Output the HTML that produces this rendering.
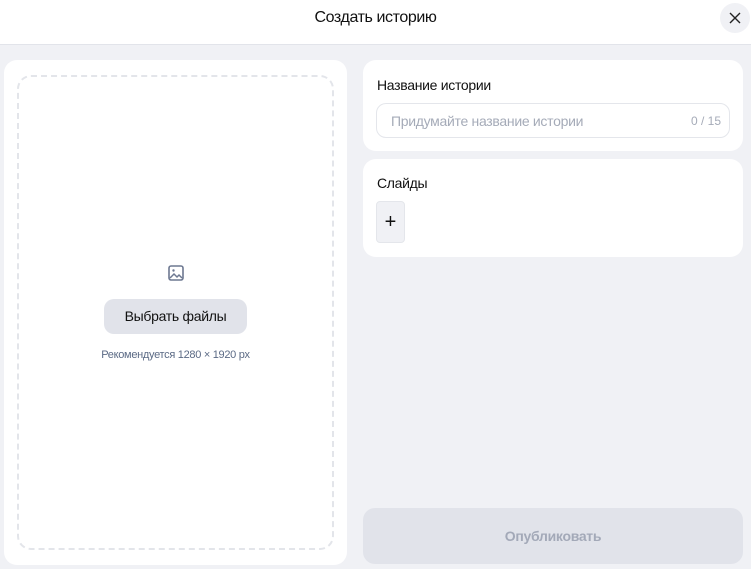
<!DOCTYPE html>
<html><head><meta charset="utf-8"><style>
*{box-sizing:border-box;margin:0;padding:0}
body{width:751px;height:569px;background:#f0f1f5;font-family:"Liberation Sans","Noto Sans CJK SC",sans-serif;position:relative;overflow:hidden;color:#111}
.hdr{position:absolute;left:0;top:0;width:751px;height:45px;background:#fff;border-bottom:1px solid #e2e4ea}
.title{position:absolute;top:9px;left:0;width:751px;text-align:center;font-size:16px;letter-spacing:-0.4px}
.close{position:absolute;left:720px;top:3px;width:30px;height:30px;border-radius:50%;background:#f0f1f5}
.card{position:absolute;background:#fff;border-radius:13px}
.dash{position:absolute;left:13px;top:15px;width:317px;height:475px;border:2px dashed #e3e5ea;border-radius:14px}
.btn{position:absolute;left:104px;top:299px;width:143px;height:35px;border-radius:10px;background:#e1e3ea;font-size:14px;text-align:center;line-height:35px;letter-spacing:-0.3px}
.rec{position:absolute;left:0;width:351px;top:349px;text-align:center;font-size:11px;color:#5b6a85;letter-spacing:-0.3px}
.lbl{position:absolute;left:14px;font-size:14px;letter-spacing:-0.3px}
.inp{position:absolute;left:13px;top:43px;width:354px;height:35px;border:1px solid #e4e6eb;border-radius:10px}
.ph{position:absolute;left:14px;top:9px;font-size:14px;color:#a5abb8;letter-spacing:-0.3px}
.cnt{position:absolute;right:8px;top:10px;font-size:12px;color:#a5abb8}
.plus{position:absolute;left:13px;top:42px;width:29px;height:42px;border-radius:4px;background:#f0f1f5;border:1px solid #e4e6eb;text-align:center;line-height:40px;font-size:20px}
.pub{position:absolute;left:363px;top:508px;width:380px;height:56px;border-radius:12px;background:#e1e3ea;color:#a3a9b8;font-size:14px;text-align:center;line-height:56px;font-weight:bold;letter-spacing:-0.3px}
</style></head><body>
<div class="hdr"><div class="title">Создать историю</div>
<div class="close"><svg width="30" height="30" viewBox="0 0 30 30"><path d="M10 10L20 20M20 10L10 20" stroke="#222" stroke-width="1.4" fill="none"/></svg></div></div>
<div class="card" style="left:4px;top:60px;width:343px;height:505px">
<div class="dash"></div></div>
<svg style="position:absolute;left:167px;top:264px" width="18" height="18" viewBox="0 0 18 18"><rect x="2" y="2" width="14" height="14" rx="2" fill="none" stroke="#6d7891" stroke-width="1.6"/><circle cx="6.5" cy="6.5" r="1.2" fill="#6d7891"/><path d="M3 14l4-4 3 3 2-2 3 3" fill="none" stroke="#6d7891" stroke-width="1.5"/></svg>
<div class="btn">Выбрать файлы</div>
<div class="rec">Рекомендуется 1280 × 1920 px</div>
<div class="card" style="left:363px;top:60px;width:380px;height:91px">
<div class="lbl" style="top:17px">Название истории</div>
<div class="inp"><div class="ph">Придумайте название истории</div><div class="cnt">0 / 15</div></div></div>
<div class="card" style="left:363px;top:159px;width:380px;height:98px">
<div class="lbl" style="top:16px">Слайды</div>
<div class="plus">+</div></div>
<div class="pub">Опубликовать</div>
</body></html>
